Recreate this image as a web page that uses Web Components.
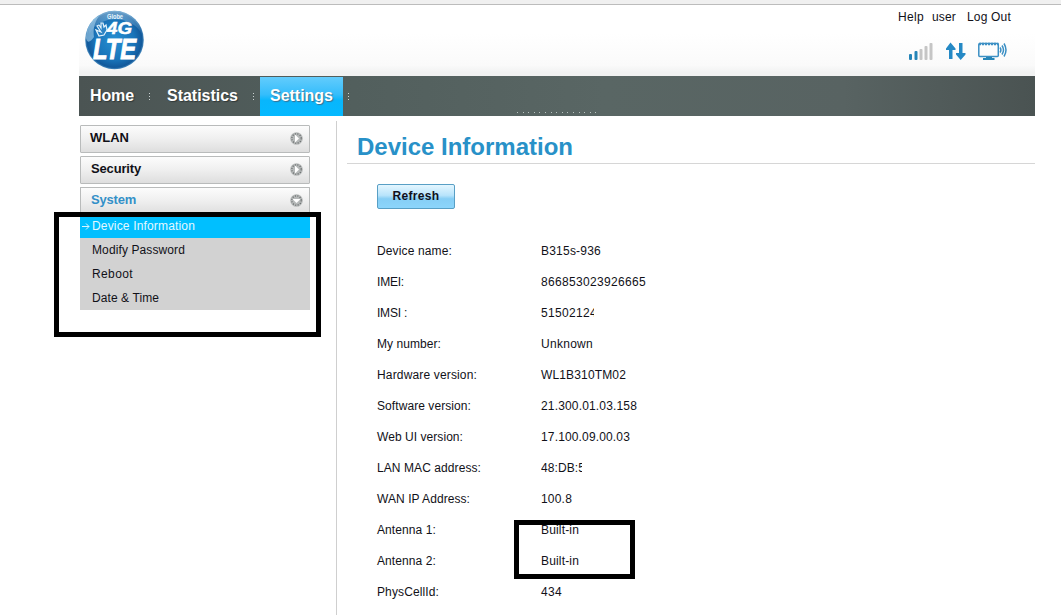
<!DOCTYPE html>
<html lang="en">
<head>
<meta charset="utf-8">
<title>Device Information</title>
<style>
  html, body { margin: 0; height: 615px; overflow: hidden; background: #fff; }
  body { font-family: "Liberation Sans", Arial, sans-serif; font-size: 12px; color: #111118; }
</style>
</head>
<body>
<router-page></router-page>
<script>
const define = (name, html, setup) => {
  customElements.define(name, class extends HTMLElement {
    connectedCallback() {
      if (this.shadowRoot) return;
      this.attachShadow({ mode: "open" }).innerHTML = typeof html === "function" ? html(this) : html;
      if (setup) setup(this);
    }
  });
};

// One line of text tracked out to the width given in "w"
define("fit-text", `
  <style>:host { display: block; flex: none; } span { display: inline-block; white-space: nowrap; }</style>
  <span><slot></slot></span>
`, (el) => {
  const span = el.shadowRoot.querySelector("span");
  const count = el.textContent.length;
  const extra = Number(el.getAttribute("w")) - span.getBoundingClientRect().width;
  span.style.letterSpacing = `${extra / count}px`;
});

define("brand-logo", `
  <style>:host { display: block; width: 60px; height: 61px; } svg { display: block; }</style>
  <svg width="60" height="61" viewBox="0 0 60 61" font-family="Liberation Sans, Arial, sans-serif" fill="#fff">
    <defs>
      <radialGradient id="ball" cx=".5" cy=".5" r=".52">
        <stop offset="0" stop-color="#278fd2"/><stop offset=".65" stop-color="#1974b9"/>
        <stop offset=".9" stop-color="#12599b"/><stop offset="1" stop-color="#6eadd6"/>
      </radialGradient>
      <linearGradient id="gloss" x1="0" y1="0" x2="0" y2="1">
        <stop offset="0" stop-color="#c9e8f8" stop-opacity=".5"/><stop offset="1" stop-color="#8cc6ea" stop-opacity=".1"/>
      </linearGradient>
    </defs>
    <circle cx="29.5" cy="30" r="29.3" fill="url(#ball)"/>
    <path d="M4 24C3 9 17 1 30 1c13 0 25 9 26 22C48 7 17 2 4 24Z" fill="url(#gloss)"/>
    <path d="M1 28C1 17 8 8 14 6 9 13 8 20 9 27 5 33 2 33 1 28Z" fill="#a8d4ee" opacity=".6"/>
    <text x="22" y="9" font-size="7.500" textLength="16" lengthAdjust="spacingAndGlyphs" font-weight="bold" fill="#e9f6fd">Globe</text>
    <path d="M16 22l-4-6 2-1 2 3 0-5 2 0 1 4 2-2 1 5-3 5-5 1-3-6Z" fill="#2b83c4" stroke="#e4f3fc" stroke-width="1.2"/>
    <text x="22" y="24" font-size="17" textLength="25" lengthAdjust="spacingAndGlyphs" font-weight="bold" font-style="italic" stroke="#fff" stroke-width=".5">4G</text>
    <text x="8" y="49" font-size="30" textLength="43" lengthAdjust="spacingAndGlyphs" font-weight="bold" font-style="italic" stroke="#fff" stroke-width="1">LTE</text>
  </svg>
`);

define("status-icons", `
  <style>:host { display: block; } svg { display: block; }</style>
  <svg width="100" height="20" viewBox="0 0 100 20">
    <g fill="#2585b8"><rect x="1" y="12" width="3" height="6" rx="1"/><rect x="6.5" y="9" width="3" height="9" rx="1"/></g>
    <g fill="#c5c5c5"><rect x="11.500" y="7" width="3" height="11" rx="1"/><rect x="16.500" y="4" width="3" height="14" rx="1"/><rect x="21.500" y="1" width="3" height="17" rx="1"/></g>
    <g fill="#2589c5">
      <path d="M42.500 0.500L47.500 6.500V8H44.500V17H41V8H38V6.500Z"/>
      <path d="M51 1H54.500V11H57.500V12.500L52.700 18L48 12.500V11H51Z"/>
    </g>
    <g fill="none" stroke="#3b8fc4" stroke-width="1.5">
      <rect x="70.800" y="1.500" width="19.500" height="13" rx="1"/>
      <path d="M71 2H90.500" stroke-width="2.500" stroke-dasharray="2 1"/>
      <path d="M92 5.500Q93.800 8 92 10.500M94 3.500Q97 8 94 12.500M96 1.500Q100 8 96 14.500" stroke-width="1.500"/>
    </g>
    <path d="M78 15H84V16H86.500V18H75V16H78Z" fill="#2585b8"/>
  </svg>
`);

define("page-header", `
  <style>
    :host { display: flex; box-sizing: border-box; height: 71px; padding: 5px 24px 0 6px; justify-content: space-between;
      background: linear-gradient(#fff 40%, #fafafa 85%, #f1f2f2 95%); }
    .side { display: flex; flex-direction: column; align-items: flex-end; }
    .links { display: flex; height: 14px; line-height: 14px; width: 113px; }
    .user { margin: 0 11px 0 8px; }
    status-icons { margin: 18px 3px 0 0; }
  </style>
  <brand-logo></brand-logo>
  <div class="side">
    <div class="links"><fit-text w="26">Help</fit-text><fit-text class="user" w="24">user</fit-text><fit-text w="44">Log Out</fit-text></div>
    <status-icons></status-icons>
  </div>
`);

define("nav-tab", (el) => `
  <style>
    :host { display: flex; height: 100%; align-items: center; font: bold 16px "Liberation Sans", Arial, sans-serif; color: #fff; text-shadow: 1px 1px 1px #303838; }
    .tab { box-sizing: border-box; height: 39px; margin-top: 1px; padding-left: ${el.getAttribute("pad")}px; width: ${el.getAttribute("width")}px; line-height: 37px; }
    :host([active]) .tab { background: linear-gradient(#63ccfc 0, #35bdfb 45%, #08b6fc 60%, #05b9ff); }
    :host([active]) { text-shadow: 1px 1px 1px #3a7090; }
    i { width: 1px; height: 7px; margin: 1px 0 0 ${el.getAttribute("gap")}px; background: repeating-linear-gradient(#cbd2d2 0 1px, transparent 1px 3px); }
  </style>
  <div class="tab"><slot></slot></div><i></i>
`);

define("main-nav", `
  <style>
    :host { display: flex; height: 40px; justify-content: space-between; background: linear-gradient(90deg, #4b5453, #515e5c 25%, #596664 55%, #586362 80%, #4a5352); }
    .tabs { display: flex; }
    .dots { align-self: flex-end; width: 83px; height: 1px; margin: 0 435px 3px 0;
      background: repeating-linear-gradient(90deg, #b8c3c0 0 1px, transparent 1px 5.600px); }
  </style>
  <div class="tabs">
    <nav-tab pad="11" width="58" gap="12"><fit-text w="44">Home</fit-text></nav-tab>
    <nav-tab pad="17" width="91" gap="12"><fit-text w="71">Statistics</fit-text></nav-tab>
    <nav-tab pad="10" width="83" gap="5" style="margin-left:6px" active><fit-text w="63">Settings</fit-text></nav-tab>
  </div>
  <div class="dots"></div>
`);

define("menu-group", (el) => `
  <style>
    :host { display: flex; box-sizing: border-box; height: 28px; padding: 0 6px 2px ${el.getAttribute("pad")}px; margin-bottom: 3px;
      align-items: center; justify-content: space-between; border: 1px solid #b9bbbb; border-radius: 1px;
      background: linear-gradient(#fcfcfc, #efefef 50%, #dedede); font: bold 13px/24px "Liberation Sans", Arial, sans-serif; }
    :host([open]) { color: #3390c8; border-bottom: 0; height: 27px; margin: 0; }
    svg { display: block; }
  </style>
  <slot></slot>
  <svg width="13" height="13" viewBox="0 0 13 13">
    <circle cx="6.500" cy="6.500" r="6.300" fill="#b5b8b8"/>
    <circle cx="6.500" cy="6.500" r="4.700" fill="none" stroke="#666a6a" stroke-width="1.300" stroke-dasharray="1 1.500"/>
    <path d="${el.hasAttribute("open") ? "M2.500 5H10.500L6.500 9Z" : "M5 2.500V10.500L9 6.500Z"}" fill="#fff"/>
  </svg>
`);

define("menu-item", `
  <style>
    :host { display: flex; box-sizing: border-box; height: 24px; padding-left: 12px; align-items: center; background: #d2d2d2; }
    :host([selected]) { padding-left: 2px; background: #00bfff; color: #e4f8ff; }
    svg { display: none; width: 8px; height: 9px; margin-right: 2px; }
    :host([selected]) svg { display: block; }
  </style>
  <svg viewBox="0 0 8 9" fill="none" stroke="#d9f5ff"><path d="M0 4.500H7M4 1.500L7 4.500L4 7.500"/></svg><slot></slot>
`);

define("side-menu", `
  <style>:host { display: block; width: 230px; padding: 9px 0 0 1px; }</style>
  <menu-group pad="9"><fit-text w="39">WLAN</fit-text></menu-group>
  <menu-group pad="10"><fit-text w="50">Security</fit-text></menu-group>
  <menu-group pad="10" open><fit-text w="45">System</fit-text></menu-group>
  <menu-item selected><fit-text w="103">Device Information</fit-text></menu-item>
  <menu-item><fit-text w="93">Modify Password</fit-text></menu-item>
  <menu-item><fit-text w="41">Reboot</fit-text></menu-item>
  <menu-item><fit-text w="67">Date &amp; Time</fit-text></menu-item>
`);

define("info-row", `
  <style>
    :host { display: grid; grid-template-columns: 164px 1fr; height: 31px; line-height: 31px; }
  </style>
  <slot name="label"></slot><slot></slot>
`);

// label, label width, value, value width, visible width when the value is cut off
const rows = [
  ["Device name:", 75, "B315s-936", 60],
  ["IMEI:", 27, "866853023926665", 105],
  ["IMSI :", 30, "51502124", 56, 53],
  ["My number:", 64, "Unknown", 52],
  ["Hardware version:", 100, "WL1B310TM02", 85],
  ["Software version:", 94, "21.300.01.03.158", 96],
  ["Web UI version:", 86, "17.100.09.00.03", 89],
  ["LAN MAC address:", 104, "48:DB:5", 44, 41],
  ["WAN IP Address:", 93, "100.8", 31],
  ["Antenna 1:", 59, "Built-in", 38],
  ["Antenna 2:", 59, "Built-in", 38],
  ["PhysCellId:", 62, "434", 21]
];

define("device-info", `
  <style>
    :host { display: block; flex: 1; margin-left: 10px; }
    h1 { margin: 0; padding: 13px 0 0 10px; height: 34px; line-height: 36px; font-size: 24px; color: #2891c8; border-bottom: 1px solid #d6d6d6; }
    button { display: block; box-sizing: border-box; width: 78px; height: 25px; margin: 20px 0 27px 30px; padding: 0 0 1px;
      border: 1px solid #589fc5; border-radius: 2px; background: linear-gradient(#e4f6ff, #b8e4fb 45%, #86cef5 60%, #8bd5fb);
      color: #10101c; font: bold 12px "Liberation Sans", Arial, sans-serif; }
    .rows { padding-left: 30px; }
    .cut { display: block; overflow: hidden; }
  </style>
  <h1><fit-text w="216">Device Information</fit-text></h1>
  <button type="button"><fit-text w="47">Refresh</fit-text></button>
  <div class="rows">
    ${rows.map(([label, lw, value, vw, cut]) => `<info-row><fit-text slot="label" w="${lw}">${label}</fit-text><div${cut ? ` class="cut" style="width:${cut}px"` : ""}><fit-text w="${vw}">${value}</fit-text></div></info-row>`).join("")}
  </div>
`);

// Thick black frame laid over the page
define("mark-box", (el) => {
  const [x, y, w, h] = el.getAttribute("box").split(" ");
  return `<style>:host { position: absolute; box-sizing: border-box; left: ${x}px; top: ${y}px; width: ${w}px; height: ${h}px; border: 5px solid #000; }</style>`;
});

define("router-page", `
  <style>
    :host { display: block; position: relative; height: 615px; overflow: hidden; }
    .strip { height: 4px; background: #f0f0f0; border-bottom: 1px solid #bcbcbc; }
    .frame { width: 956px; margin-left: 79px; }
    .body { display: flex; height: 499px; }
    .rule { width: 1px; margin: 5px 0 0 26px; background: #cfcfcf; }
  </style>
  <div class="strip"></div>
  <div class="frame">
    <page-header></page-header>
    <main-nav></main-nav>
    <div class="body">
      <side-menu></side-menu>
      <div class="rule"></div>
      <device-info></device-info>
    </div>
  </div>
  <mark-box box="54 212 267 125"></mark-box>
  <mark-box box="514 520 121 59"></mark-box>
`);
</script>
</body>
</html>
